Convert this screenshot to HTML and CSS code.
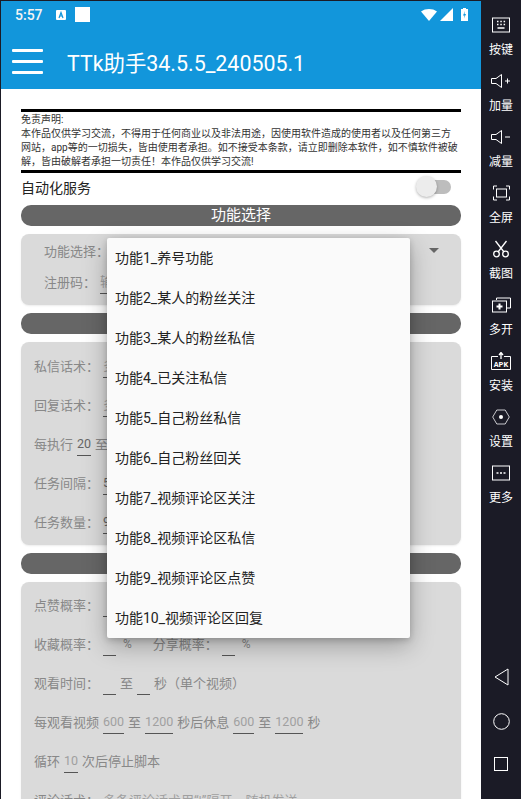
FILE: index.html
```html
<!DOCTYPE html>
<html lang="zh">
<head>
<meta charset="utf-8">
<title>TTk助手</title>
<link rel="stylesheet" href="styles.css">
</head>
<body>
<div class="device">
  <main class="screen">
    <div class="appbar">
      <div class="status">
        <span class="time">5:57</span>
        <svg class="s-a" width="10" height="10" viewBox="0 0 10 10"><rect width="10" height="10" rx="1" fill="#fff"/><path d="M3 8 5 2.500 7 8M3.800 6h2.400" fill="none" stroke="#1296db" stroke-width="1.200"/></svg>
        <span class="s-box"></span>
        <span class="s-right">
          <svg width="16" height="12" viewBox="0 0 16 12"><path d="M0 2.500C4.500-.8 11.500-.8 16 2.500L8 12Z" fill="#fff"/></svg>
          <svg width="13" height="13" viewBox="0 0 13 13"><path d="M13 0V13H0Z" fill="#fff"/></svg>
          <svg class="s-batt" width="7" height="13" viewBox="0 0 7 13"><path d="M2 0H5V1H7V13H0V1H2Z" fill="#fff"/><path d="M4 3 2 7.500H3.500L3 10.500 5 6H3.500Z" fill="#1296db"/></svg>
        </span>
      </div>
      <div class="toolbar">
        <div class="burger"><i></i><i></i><i></i></div>
        <h1 class="title">TTk助手34.5.5_240505.1</h1>
      </div>
    </div>
    <div class="content">
      <div class="notice">
        <p>免责声明:</p>
        <p>本作品仅供学习交流，不得用于任何商业以及非法用途，因使用软件造成的使用者以及任何第三方网站，app等的一切损失，皆由使用者承担。如不接受本条款，请立即删除本软件，如不慎软件被破解，皆由破解者承担一切责任！本作品仅供学习交流!</p>
      </div>
      <div class="auto">
        <span>自动化服务</span>
        <span class="switch"><span class="knob"></span></span>
      </div>
      <div class="bar">功能选择</div>
      <section class="card card-one">
        <div class="row indent"><span>功能选择：</span><span class="caret"></span></div>
        <div class="row indent"><span>注册码：</span><span class="field ph">输</span></div>
      </section>
      <div class="bar"></div>
      <section class="card card-two">
        <div class="row"><span>私信话术：</span><span class="field ph">多</span></div>
        <div class="row"><span>回复话术：</span><span class="field ph">多</span></div>
        <div class="row"><span>每执行</span><span class="field dark">20</span><span>至</span></div>
        <div class="row"><span>任务间隔：</span><span class="field dark">5</span></div>
        <div class="row"><span>任务数量：</span><span class="field dark">9</span></div>
      </section>
      <div class="bar"></div>
      <section class="card card-three">
        <div class="row"><span>点赞概率：</span><span class="field blank"></span></div>
        <div class="row"><span>收藏概率：</span><span class="field blank"></span><span class="pct">%</span><span class="later">分享概率：</span><span class="field blank"></span><span class="pct">%</span></div>
        <div class="row"><span>观看时间：</span><span class="field blank"></span><span>至</span><span class="field blank"></span><span>秒（单个视频）</span></div>
        <div class="row"><span>每观看视频</span><span class="field">600</span><span>至</span><span class="field">1200</span><span>秒后休息</span><span class="field">600</span><span>至</span><span class="field">1200</span><span>秒</span></div>
        <div class="row"><span>循环</span><span class="field">10</span><span>次后停止脚本</span></div>
        <div class="row"><span>评论话术：</span><span class="hint">多条评论话术用“|”隔开，随机发送</span></div>
      </section>
    </div>
    <ul class="menu">
      <li>功能1_养号功能</li>
      <li>功能2_某人的粉丝关注</li>
      <li>功能3_某人的粉丝私信</li>
      <li>功能4_已关注私信</li>
      <li>功能5_自己粉丝私信</li>
      <li>功能6_自己粉丝回关</li>
      <li>功能7_视频评论区关注</li>
      <li>功能8_视频评论区私信</li>
      <li>功能9_视频评论区点赞</li>
      <li>功能10_视频评论区回复</li>
    </ul>
  </main>
  <aside class="side">
    <div class="tools">
      <div class="tool"><svg width="18" height="15" viewBox="0 0 18 15" fill="none" stroke="#fff"><rect x=".5" y=".5" width="17" height="14"/><path d="M5 4h1.500M8.300 4h1.500M11.600 4h1.500M5 7h1.500M8.300 7h1.500M11.600 7h1.500M5.500 10.500h7" stroke-width="1.500"/></svg><span>按键</span></div>
      <div class="tool"><svg width="20" height="14" viewBox="0 0 20 14" fill="none" stroke="#fff"><path d="M.5 4.500H5L10.500.5V13.500L5 9.500H.5ZM14 7h5M16.500 4.500v5"/></svg><span>加量</span></div>
      <div class="tool"><svg width="20" height="14" viewBox="0 0 20 14" fill="none" stroke="#fff"><path d="M.5 4.500H5L10.500.5V13.500L5 9.500H.5ZM14 7h5"/></svg><span>减量</span></div>
      <div class="tool"><svg width="17" height="15" viewBox="0 0 17 15" fill="none" stroke="#fff"><path d="M.5 4V.5H4M13 .5H16.500V4M.5 11V14.500H4M13 14.500H16.500V11"/><rect x="3.500" y="3.500" width="10" height="8"/></svg><span>全屏</span></div>
      <div class="tool"><svg width="16" height="17" viewBox="0 0 16 17" fill="none" stroke="#fff" stroke-width="1.300"><path d="M2.500.5 11 11.500M13.500.5 5 11.500"/><circle cx="3.500" cy="13.500" r="2.800"/><circle cx="12.500" cy="13.500" r="2.800"/></svg><span>截图</span></div>
      <div class="tool"><svg width="19" height="15" viewBox="0 0 19 15" fill="none" stroke="#fff"><path d="M4.500 2.500V.5H18.500V10.500H15"/><rect x=".5" y="3.500" width="14" height="11"/><path d="M7.500 6v6M4.500 9h6" stroke-width="2"/></svg><span>多开</span></div>
      <div class="tool"><svg width="20" height="18" viewBox="0 0 20 18" fill="none" stroke="#fff"><path d="M7 4.500H.5V17.500H19.500V4.500H13"/><path d="M10 7V1M8 3l2-2.500L12 3" stroke-width="1.300"/><text x="10" y="15" font-family="'Liberation Mono',monospace" font-size="8" font-weight="700" text-anchor="middle" fill="#fff" stroke="none">APK</text></svg><span>安装</span></div>
      <div class="tool"><svg width="18" height="16" viewBox="0 0 18 16" fill="none" stroke="#c8c8cc"><path d="M4.800 1H13.200L17.300 8 13.200 15H4.800L.7 8Z"/><circle cx="9" cy="8" r="2" fill="#fff" stroke="none"/></svg><span>设置</span></div>
      <div class="tool"><svg width="18" height="15" viewBox="0 0 18 15" fill="none" stroke="#fff"><rect x=".5" y=".5" width="17" height="14"/><path d="M4.500 7.500h2M8 7.500h2M11.500 7.500h2" stroke-width="1.500"/></svg><span>更多</span></div>
    </div>
    <div class="nav">
      <svg width="15" height="18" viewBox="0 0 15 18" fill="none" stroke="#fff"><path d="M14 1V17L1 9Z"/></svg>
      <svg width="17" height="17" viewBox="0 0 17 17" fill="none" stroke="#fff"><circle cx="8.500" cy="8.500" r="7.800"/></svg>
      <svg width="14" height="14" viewBox="0 0 14 14" fill="none" stroke="#fff"><rect x=".5" y=".5" width="13" height="13"/></svg>
    </div>
  </aside>
</div>
</body>
</html>
```
FILE: styles.css
```css
* { box-sizing: border-box; }
html, body { margin: 0; height: 100%; overflow: hidden; }
body {
  font-family: Roboto, "Noto Sans CJK SC", sans-serif;
  background: #1b1b26;
}
.device { display: flex; width: 521px; height: 799px; }
.screen {
  position: relative;
  width: 480px;
  margin: 1px 0 0 1px;
  height: 798px;
  overflow: hidden;
  background: #fff;
}
.side { width: 40px; display: flex; flex-direction: column; }

.appbar { background: #1296db; height: 88px; color: #fff; }
.status { display: flex; align-items: center; height: 24px; padding-left: 14px; padding-top: 3px; }
.time { font-size: 14px; font-weight: 500; width: 41px; color: #f4f4f4; }
.s-a { margin-right: 9px; }
.s-box { width: 15px; height: 15px; background: #fff; }
.s-right { margin-left: auto; display: flex; align-items: center; gap: 3px; padding-right: 13px; }
.s-right .s-batt { margin-left: 5px; }
.toolbar { display: flex; align-items: center; height: 64px; padding: 9px 0 0 11px; }
.burger { width: 31px; display: flex; flex-direction: column; gap: 8px; }
.burger i { display: block; height: 3px; border-radius: 1px; background: #fff; }
.title { margin: 0 0 0 24px; font-size: 21.400px; font-weight: 400; }

.content { padding: 20px 20px 0; color: #888; font-size: 13px; }
.notice {
  border-top: 3px solid #000;
  border-bottom: 3px solid #000;
  color: #333;
  font-size: 10px;
  line-height: 14px;
  padding: 1px 1px 0 0;
  height: 64px;
}
.notice p { margin: 0; }
.auto {
  display: flex;
  align-items: center;
  justify-content: space-between;
  height: 32px;
  padding: 0 10px 5px 0;
  color: #222;
  font-size: 14px;
}
.switch { position: relative; display: block; width: 30px; height: 14px; border-radius: 7px; background: #bdbdbd; }
.knob {
  position: absolute;
  left: -5px;
  top: -4px;
  width: 21px;
  height: 21px;
  border-radius: 50%;
  background: #ececec;
  box-shadow: 0 1px 3px rgba(0,0,0,.3);
}
.bar {
  height: 21px;
  border-radius: 10px;
  background: #666;
  color: #fff;
  font-size: 15px;
  line-height: 21px;
  text-align: center;
}
.card {
  margin: 8px 0;
  border-radius: 8px;
  background: #dadada;
  box-shadow: 0 1px 2px rgba(0,0,0,.08);
}
.card-one { height: 71px; padding-top: 1px; }
.card-two { height: 203px; padding-top: 4px; }
.card-three { height: 240px; padding-top: 3px; }
.row {
  display: flex;
  align-items: center;
  gap: 4px;
  height: 39px;
  padding-left: 13px;
  white-space: nowrap;
}
.row.indent { height: 31px; padding-left: 23px; }
.field {
  display: block;
  min-width: 13px;
  height: 23px;
  margin-top: 1px;
  border-bottom: 1px solid #555;
  line-height: 22px;
  font-size: 12.500px;
  color: #a0a0a0;
}
.field.dark { color: #666; }
.field.ph { font-size: 13px; }
.pct { font-size: 12px; margin-left: 3px; }
.later { margin-left: 17px; }
.hint { color: #a0a0a0; }
.caret {
  position: absolute;
  left: 428px;
  top: 247px;
  border-left: 5px solid transparent;
  border-right: 5px solid transparent;
  border-top: 5px solid #666;
}
.menu {
  position: absolute;
  left: 106px;
  top: 237px;
  width: 303px;
  margin: 0;
  padding: 0;
  list-style: none;
  background: #fafafa;
  border-radius: 2px;
  color: #222;
  font-size: 14px;
  box-shadow: 0 8px 24px rgba(0,0,0,.28), 0 2px 6px rgba(0,0,0,.18);
}
.menu li { height: 40px; line-height: 40px; padding-left: 8px; }

.tools { display: flex; flex-direction: column; padding-top: 16px; }
.tool {
  height: 56px;
  display: flex;
  flex-direction: column;
  align-items: center;
  color: #fff;
  font-size: 12px;
  line-height: 14px;
}
.tool svg { height: 18px; display: block; margin-bottom: 9px; flex: none; }
.nav {
  margin-top: 148px;
  display: flex;
  flex-direction: column;
  align-items: center;
  gap: 27px;
}
```
